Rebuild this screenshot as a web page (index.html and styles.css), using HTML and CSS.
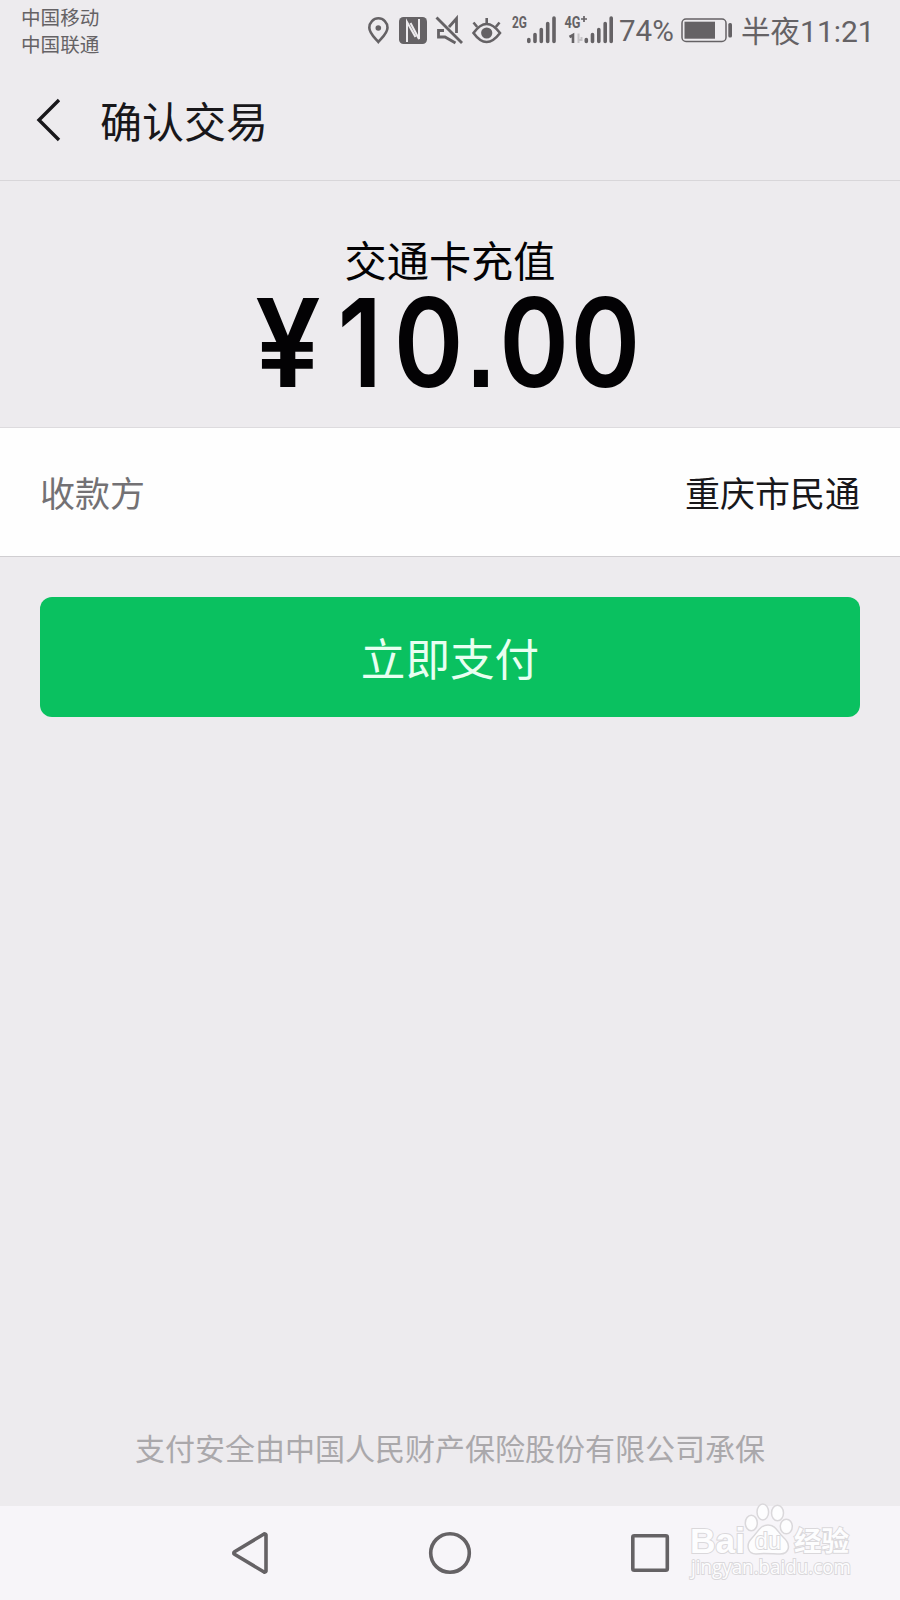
FILE: index.html
```html
<!DOCTYPE html>
<html lang="zh-CN">
<head>
<meta charset="UTF-8">
<meta name="viewport" content="width=device-width, initial-scale=1.0">
<title>确认交易</title>
<link rel="stylesheet" href="styles.css">
</head>
<body>
    <div class="status-bar">
        <div class="carriers">
            <div>中国移动</div>
            <div>中国联通</div>
        </div>
        <svg class="status-icons" width="247" height="60" viewBox="366 0 247 60">
            <!-- location -->
            <path d="M378.3 42c-4-4.600-9-9-9-14.300a9 9.300 0 0 1 18.200 0c0 5.300-5.200 9.700-9.200 14.300z" fill="none" stroke="#656265" stroke-width="2.600"/>
            <circle cx="378.300" cy="28" r="2.800" fill="#656265"/>
            <!-- nfc -->
            <rect x="399" y="17" width="28" height="27" rx="4.500" fill="#656265"/>
            <path d="M407 42V22l8.500 15M419 19v20l-8.500-16" fill="none" stroke="#edebee" stroke-width="2"/>
            <!-- mute -->
            <path d="M449 27l7.500-8.500v14.500M444 30.500h-5.500v6.500h6.500l10.500 6" fill="none" stroke="#656265" stroke-width="2.800"/>
            <path d="M436.500 17.500l25.500 25.500" stroke="#656265" stroke-width="2.800"/>
            <!-- eye comfort -->
            <path d="M473.500 33q13-18 26.500 0q-13.500 18-26.500 0z" fill="none" stroke="#656265" stroke-width="2.600"/>
            <circle cx="486.700" cy="33" r="5.600" fill="#656265"/>
            <path d="M486.700 18v6M473.500 22.500l3.700 4.500M499.500 22.500l-3.700 4.500" stroke="#656265" stroke-width="2.600"/>
            <!-- signal 1 -->
            <text class="net" x="512" y="27.500" textLength="15" lengthAdjust="spacingAndGlyphs">2G</text>
            <path d="M528.800 39.500v2M535 34.500v7M541.300 29.500v12M547.700 23.500v18M554 18v23.500" stroke="#656265" stroke-width="3.600" stroke-linecap="round"/>
            <!-- signal 2 -->
            <text class="net" x="564.500" y="27.500" textLength="16" lengthAdjust="spacingAndGlyphs">4G</text>
            <path d="M581 19h6M584 16v6" stroke="#656265" stroke-width="1.700"/>
            <path d="M569.500 37l3.500-2v8" fill="none" stroke="#656265" stroke-width="2.600"/>
            <path d="M578.500 33.500v9.500M581.500 37v3h-3" fill="none" stroke="#c5c3c6" stroke-width="2"/>
            <path d="M586.300 39.500v2M592.500 34.500v7M598.800 29.500v12M605.200 23.500v18M611.200 18v23.500" stroke="#656265" stroke-width="3.600" stroke-linecap="round"/>
        </svg>
        <div class="battery-level">74%</div>
        <svg class="battery" width="52" height="26" viewBox="681 18 52 26">
            <rect x="682" y="19" width="44" height="22.500" rx="4" fill="none" stroke="#656265" stroke-width="1.500"/>
            <rect x="684.500" y="21.700" width="30.500" height="17" fill="#656265"/>
            <rect x="728.300" y="23" width="3.700" height="14.500" rx="1.500" fill="#656265"/>
        </svg>
        <div class="clock">半夜<span>11:21</span></div>
    </div>

    <div class="header">
        <svg class="back" width="26" height="44" viewBox="0 0 26 44">
            <path d="M23 2L3 22l20 20" fill="none" stroke="#18171a" stroke-width="3.400"/>
        </svg>
        <h1>确认交易</h1>
    </div>

    <div class="summary">
        <div class="product">交通卡充值</div>
        <!-- condensed digits, one x per glyph -->
        <svg class="amount" width="400" height="130" viewBox="250 280 400 130">
            <text transform="scale(0.95 1)" x="303" y="387">¥</text>
            <text transform="scale(0.86 1)" x="418.500 498.300 559.300 621 704" y="387">10<tspan class="point">.</tspan>00</text>
        </svg>
    </div>

    <div class="payee">
        <div class="payee-label">收款方</div>
        <div>重庆市民通</div>
    </div>

    <button class="pay-btn">立即支付</button>

    <p class="insurance">支付安全由中国人民财产保险股份有限公司承保</p>

    <div class="nav-bar">
        <svg width="44" height="44" viewBox="0 0 44 44"><path d="M38 4v36a1.500 1.500 0 0 1-2 1L6.500 23.300a1.500 1.500 0 0 1 0-2.600L36 3a1.500 1.500 0 0 1 2 1z"/></svg>
        <svg width="44" height="44" viewBox="0 0 44 44"><circle cx="22" cy="22" r="19.300"/></svg>
        <svg width="44" height="44" viewBox="0 0 44 44"><rect x="4.800" y="4.800" width="34.500" height="34.500" rx="1.500"/></svg>
    </div>

    <svg class="watermark" width="200" height="98" viewBox="680 1500 200 98">
        <g fill="#fdfdfe" stroke="#dad8db" stroke-width="1.500">
            <text class="mark-logo" x="690" y="1553" textLength="55" lengthAdjust="spacingAndGlyphs">Bai</text>
            <ellipse cx="751.300" cy="1523" rx="6" ry="7.700"/>
            <ellipse cx="762.800" cy="1512" rx="5.800" ry="8"/>
            <ellipse cx="777.500" cy="1513" rx="6" ry="7.700"/>
            <ellipse cx="786.300" cy="1526.500" rx="6" ry="7.300"/>
            <path d="M768 1525c8 0 9.500 7 15 12 9 8 6 17-3 17-6 0-18-1-24 0-8 0-11-9-4-16 6-6 8-13 16-13z"/>
            <text class="mark-du" x="755" y="1549" textLength="26" lengthAdjust="spacingAndGlyphs">du</text>
            <text class="mark-cn" x="794" y="1551" textLength="55" lengthAdjust="spacingAndGlyphs">经验</text>
            <text class="mark-url" x="691" y="1573.500" textLength="160" lengthAdjust="spacingAndGlyphs">jingyan.baidu.com</text>
        </g>
    </svg>
</body>
</html>
```

FILE: styles.css
```css
body {
    margin: 0;
    height: 1600px;
    display: flex;
    flex-direction: column;
    position: relative;
    overflow: hidden;
    background-color: #edebee;
    color: #18171a;
    font-family: "Noto Sans CJK SC", sans-serif;
}

.status-bar {
    display: flex;
    height: 60px;
    color: #656265;
}

.carriers {
    width: 345px;
    padding: 3px 0 0 21px;
    font-size: 19.6px;
    line-height: 27px;
}

.net {
    font-family: Roboto, sans-serif;
    font-size: 16px;
    font-weight: bold;
    fill: #656265;
}

.battery-level {
    width: 62px;
    padding-left: 6px;
    font-family: Roboto, sans-serif;
    font-size: 29.5px;
    line-height: 62px;
}

.battery {
    margin-top: 18px;
}

.clock {
    padding-left: 8px;
    font-size: 29.5px;
    line-height: 58px;
    white-space: nowrap;
}

.clock span {
    font-family: Roboto, sans-serif;
    font-size: 30px;
}

.header {
    display: flex;
    align-items: center;
    height: 120px;
    padding-left: 36px;
    border-bottom: 1px solid #d8d6d9;
}

.header h1 {
    margin: 0 0 0 38px;
    font-size: 42px;
    font-weight: normal;
    line-height: 60px;
}

.summary {
    height: 246px;
    border-bottom: 1px solid #dddbde;
    color: #030204;
    text-align: center;
}

.product {
    padding-top: 48px;
    font-size: 42.2px;
    line-height: 60px;
}

.amount {
    display: block;
    margin: -9px auto 0;
    overflow: visible;
    font-family: Inter, sans-serif;
    font-size: 123px;
    font-weight: 600;
    fill: #030204;
    text-anchor: middle;
}

.point {
    font-family: "Liberation Sans", sans-serif;
    font-size: 115px;
    font-weight: bold;
}

.payee {
    display: flex;
    justify-content: space-between;
    align-items: center;
    box-sizing: border-box;
    height: 129px;
    padding: 0 40px 2px;
    border-bottom: 1px solid #d0ced1;
    background-color: #fefefe;
    font-size: 35px;
}

.payee-label {
    color: #737174;
}

.pay-btn {
    height: 120px;
    margin: 40px 40px 0;
    padding: 0 0 2px;
    border: none;
    border-radius: 12px;
    background-color: #0ac160;
    color: #e8fff1;
    font-family: inherit;
    font-size: 44.6px;
    cursor: pointer;
}

.insurance {
    margin: auto 0 37px;
    color: #aaa8ab;
    font-size: 30px;
    line-height: 44px;
    text-align: center;
}

.nav-bar {
    display: flex;
    justify-content: center;
    align-items: center;
    gap: 156px;
    height: 94px;
    background-color: #f7f5f9;
}

.nav-bar svg {
    fill: none;
    stroke: #656265;
    stroke-width: 3.6;
}

/* sits over the nav bar */
.watermark {
    position: absolute;
    left: 680px;
    top: 1500px;
}

.watermark text {
    paint-order: stroke;
    stroke-width: 2px;
}

.mark-logo {
    font-family: "Liberation Sans", sans-serif;
    font-size: 35px;
    font-weight: bold;
}

.mark-du {
    font-family: "Liberation Sans", sans-serif;
    font-size: 24px;
}

.mark-cn {
    font-size: 27px;
    font-weight: bold;
}

.mark-url {
    font-family: "Open Sans", sans-serif;
    font-size: 20px;
}
```
